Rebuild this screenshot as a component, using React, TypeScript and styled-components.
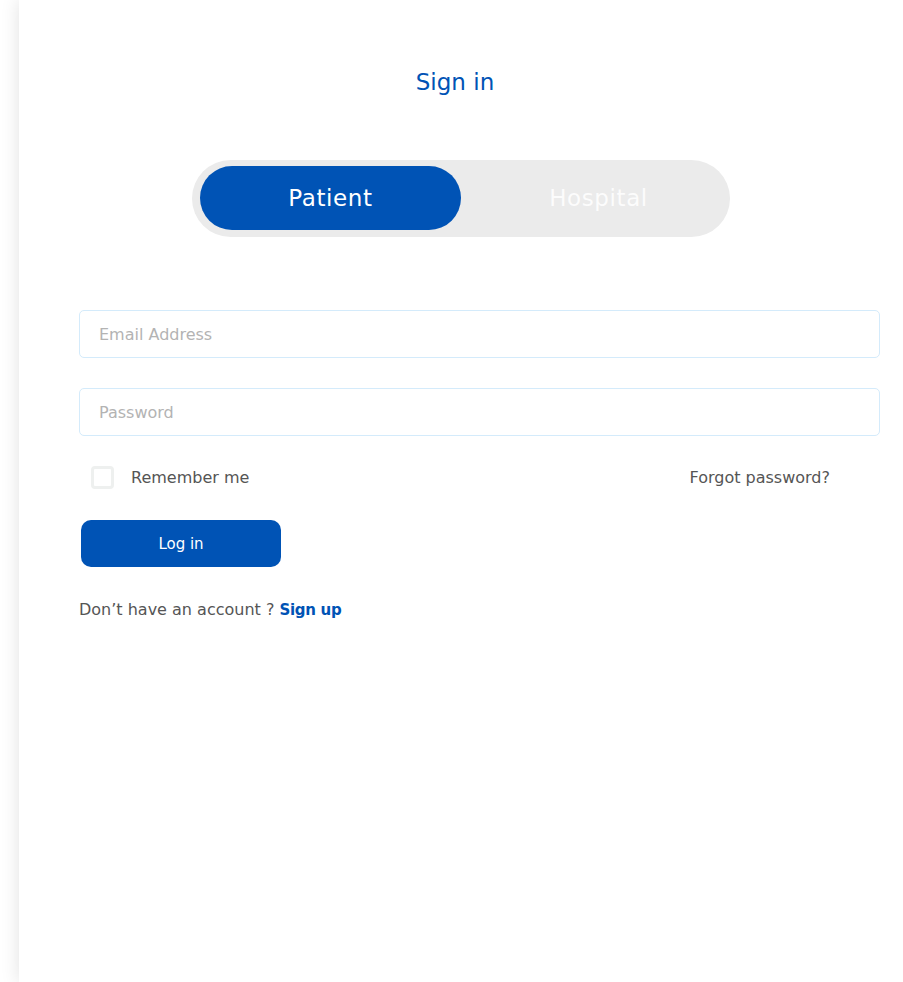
import React, { useState } from "react";
import styled, { createGlobalStyle } from "styled-components";

const Global = createGlobalStyle`
  html, body { margin: 0; padding: 0; background: #ffffff; }
  body { font-family: "DejaVu Sans", "Open Sans", sans-serif; }
  * { box-sizing: border-box; }
`;

const Page = styled.div`
  display: flex;
  min-height: 982px;
  overflow: hidden;
  padding-left: 19px;
`;

const Card = styled.main`
  flex: 1;
  min-height: 982px;
  background: #ffffff;
  box-shadow: 0 0 18px rgba(0, 0, 0, 0.12);
  padding-top: 64px;
  display: flex;
  flex-direction: column;
`;

const Title = styled.h1`
  margin: 0;
  padding-right: 12px;
  text-align: center;
  font-size: 23px;
  line-height: 36px;
  font-weight: 400;
  color: #0053b5;
`;

const Toggle = styled.div`
  align-self: flex-start;
  margin: 60px 0 0 173px;
  width: 538px;
  height: 77px;
  padding: 6px 8px 7px;
  border-radius: 39px;
  background: #ebebeb;
  display: flex;
`;

const ToggleOption = styled.button<{ $active?: boolean }>`
  border: none;
  cursor: pointer;
  font-family: inherit;
  font-size: 23px;
  letter-spacing: 0.6px;
  color: #ffffff;
  border-radius: 32px;
  background: ${(p) => (p.$active ? "#0053b5" : "transparent")};
  width: ${(p) => (p.$active ? "261px" : "auto")};
  flex: ${(p) => (p.$active ? "0 0 auto" : "1")};
  padding: ${(p) => (p.$active ? "0" : "0 0 0 14px")};
  opacity: ${(p) => (p.$active ? 1 : 0.85)};
`;

const Form = styled.form`
  margin: 73px 0 0 60px;
  width: 801px;
  display: flex;
  flex-direction: column;
`;

const Input = styled.input`
  height: 48px;
  width: 100%;
  border: 1px solid #d4ebfb;
  border-radius: 5px;
  padding: 0 19px;
  font-family: inherit;
  font-size: 16px;
  color: #333;
  outline: none;
  & + & { margin-top: 30px; }
  &::placeholder { color: #b3b3b3; }
`;

const OptionsRow = styled.div`
  margin-top: 30px;
  padding: 0 50px 0 12px;
  display: flex;
  align-items: center;
  justify-content: space-between;
  height: 23px;
`;

const CheckLabel = styled.label`
  display: flex;
  align-items: center;
  gap: 17px;
  font-size: 16px;
  color: #555555;
  cursor: pointer;
`;

const CheckBox = styled.span`
  width: 23px;
  height: 23px;
  border: 3px solid #eef0ef;
  border-radius: 4px;
  background: #fff;
`;

const LinkText = styled.a`
  font-size: 16px;
  color: #555555;
  text-decoration: none;
`;

const LoginButton = styled.button`
  margin: 31px 0 0 2px;
  width: 200px;
  height: 47px;
  border: none;
  border-radius: 10px;
  background: #0053b5;
  color: #ffffff;
  font-family: inherit;
  font-size: 15px;
  cursor: pointer;
`;

const Footer = styled.p`
  margin: 32px 0 0;
  font-size: 16px;
  line-height: 22px;
  color: #555555;
`;

const SignUp = styled.a`
  color: #0053b5;
  font-size: 15px;
  font-weight: 700;
  letter-spacing: -0.3px;
  text-decoration: none;
`;

export default function App() {
  const [mode, setMode] = useState<"patient" | "hospital">("patient");
  return (
    <>
      <Global />
      <Page>
        <Card>
          <Title>Sign in</Title>
          <Toggle>
            <ToggleOption type="button" $active={mode === "patient"} onClick={() => setMode("patient")}>
              Patient
            </ToggleOption>
            <ToggleOption type="button" $active={mode === "hospital"} onClick={() => setMode("hospital")}>
              Hospital
            </ToggleOption>
          </Toggle>
          <Form onSubmit={(e) => e.preventDefault()}>
            <Input type="email" placeholder="Email Address" />
            <Input type="password" placeholder="Password" />
            <OptionsRow>
              <CheckLabel>
                <CheckBox />
                Remember me
              </CheckLabel>
              <LinkText href="#">Forgot password?</LinkText>
            </OptionsRow>
            <LoginButton type="submit">Log in</LoginButton>
            <Footer>
              Don’t have an account ? <SignUp href="#">Sign up</SignUp>
            </Footer>
          </Form>
        </Card>
      </Page>
    </>
  );
}
